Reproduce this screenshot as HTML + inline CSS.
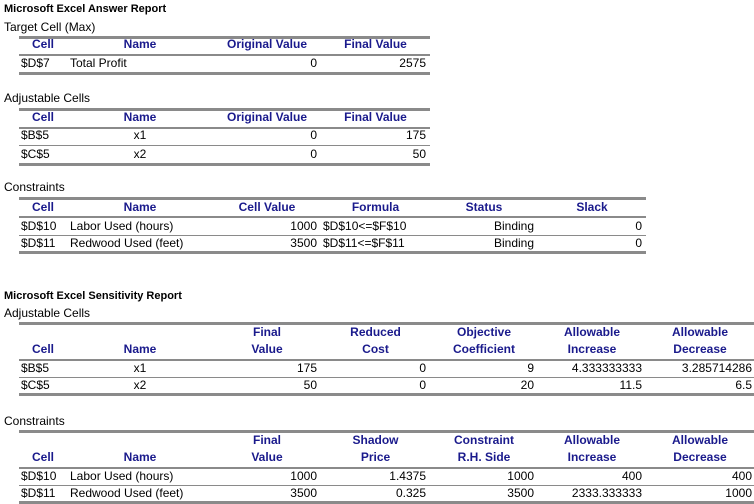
<!DOCTYPE html>
<html><head><meta charset="utf-8"><style>
body{margin:0;width:754px;height:504px;background:#fff;position:relative;overflow:hidden}
.t{position:absolute;font:12px/14px "Liberation Sans",sans-serif;white-space:nowrap;color:#000}
.b{font-weight:bold}
.h{color:#1a1a8c;font-weight:bold;text-align:center}
.r{text-align:right;padding-right:4px;box-sizing:border-box}
.c{text-align:center}
.L{position:absolute;background:#8a8a8a}
</style></head><body>
<div class="t b" style="left:4px;top:2px;font-size:11px">Microsoft Excel Answer Report</div>
<div class="t" style="left:4px;top:20px">Target Cell (Max)</div>
<div class="L" style="left:19px;top:36px;width:411px;height:3px"></div>
<div class="t h" style="left:19px;top:37px;width:48px">Cell</div>
<div class="t h" style="left:67px;top:37px;width:146px">Name</div>
<div class="t h" style="left:213px;top:37px;width:108px">Original Value</div>
<div class="t h" style="left:321px;top:37px;width:109px">Final Value</div>
<div class="L" style="left:19px;top:54px;width:411px;height:2px"></div>
<div class="t" style="left:21px;top:56px">$D$7</div>
<div class="t" style="left:70px;top:56px">Total Profit</div>
<div class="t r" style="left:213px;top:56px;width:108px">0</div>
<div class="t r" style="left:321px;top:56px;width:109px">2575</div>
<div class="L" style="left:19px;top:72px;width:411px;height:3px"></div>

<div class="t" style="left:4px;top:91px">Adjustable Cells</div>
<div class="L" style="left:19px;top:108px;width:411px;height:3px"></div>
<div class="t h" style="left:19px;top:110px;width:48px">Cell</div>
<div class="t h" style="left:67px;top:110px;width:146px">Name</div>
<div class="t h" style="left:213px;top:110px;width:108px">Original Value</div>
<div class="t h" style="left:321px;top:110px;width:109px">Final Value</div>
<div class="L" style="left:19px;top:127px;width:411px;height:2px"></div>
<div class="t" style="left:21px;top:128px">$B$5</div>
<div class="t c" style="left:67px;top:128px;width:146px">x1</div>
<div class="t r" style="left:213px;top:128px;width:108px">0</div>
<div class="t r" style="left:321px;top:128px;width:109px">175</div>
<div class="L" style="left:19px;top:145px;width:411px;height:1px"></div>
<div class="t" style="left:21px;top:147px">$C$5</div>
<div class="t c" style="left:67px;top:147px;width:146px">x2</div>
<div class="t r" style="left:213px;top:147px;width:108px">0</div>
<div class="t r" style="left:321px;top:147px;width:109px">50</div>
<div class="L" style="left:19px;top:163px;width:411px;height:3px"></div>

<div class="t" style="left:4px;top:180px">Constraints</div>
<div class="L" style="left:19px;top:197px;width:627px;height:3px"></div>
<div class="t h" style="left:19px;top:200px;width:48px">Cell</div>
<div class="t h" style="left:67px;top:200px;width:146px">Name</div>
<div class="t h" style="left:213px;top:200px;width:108px">Cell Value</div>
<div class="t h" style="left:321px;top:200px;width:109px">Formula</div>
<div class="t h" style="left:430px;top:200px;width:108px">Status</div>
<div class="t h" style="left:538px;top:200px;width:108px">Slack</div>
<div class="L" style="left:19px;top:216px;width:627px;height:2px"></div>
<div class="t" style="left:21px;top:219px">$D$10</div>
<div class="t" style="left:70px;top:219px">Labor Used (hours)</div>
<div class="t r" style="left:213px;top:219px;width:108px">1000</div>
<div class="t" style="left:323px;top:219px">$D$10&lt;=$F$10</div>
<div class="t r" style="left:430px;top:219px;width:108px">Binding</div>
<div class="t r" style="left:538px;top:219px;width:108px">0</div>
<div class="L" style="left:19px;top:235px;width:627px;height:1px"></div>
<div class="t" style="left:21px;top:236px">$D$11</div>
<div class="t" style="left:70px;top:236px">Redwood Used (feet)</div>
<div class="t r" style="left:213px;top:236px;width:108px">3500</div>
<div class="t" style="left:323px;top:236px">$D$11&lt;=$F$11</div>
<div class="t r" style="left:430px;top:236px;width:108px">Binding</div>
<div class="t r" style="left:538px;top:236px;width:108px">0</div>
<div class="L" style="left:19px;top:251px;width:627px;height:3px"></div>

<div class="t b" style="left:4px;top:289px;font-size:11px">Microsoft Excel Sensitivity Report</div>
<div class="t" style="left:4px;top:306px">Adjustable Cells</div>
<div class="L" style="left:19px;top:322px;width:735px;height:3px"></div>
<div class="t h" style="left:213px;top:325px;width:108px">Final</div>
<div class="t h" style="left:321px;top:325px;width:109px">Reduced</div>
<div class="t h" style="left:430px;top:325px;width:108px">Objective</div>
<div class="t h" style="left:538px;top:325px;width:108px">Allowable</div>
<div class="t h" style="left:646px;top:325px;width:108px">Allowable</div>
<div class="t h" style="left:19px;top:342px;width:48px">Cell</div>
<div class="t h" style="left:67px;top:342px;width:146px">Name</div>
<div class="t h" style="left:213px;top:342px;width:108px">Value</div>
<div class="t h" style="left:321px;top:342px;width:109px">Cost</div>
<div class="t h" style="left:430px;top:342px;width:108px">Coefficient</div>
<div class="t h" style="left:538px;top:342px;width:108px">Increase</div>
<div class="t h" style="left:646px;top:342px;width:108px">Decrease</div>
<div class="L" style="left:19px;top:359px;width:735px;height:2px"></div>
<div class="t" style="left:21px;top:361px">$B$5</div>
<div class="t c" style="left:67px;top:361px;width:146px">x1</div>
<div class="t r" style="left:213px;top:361px;width:108px">175</div>
<div class="t r" style="left:321px;top:361px;width:109px">0</div>
<div class="t r" style="left:430px;top:361px;width:108px">9</div>
<div class="t r" style="left:538px;top:361px;width:108px">4.333333333</div>
<div class="t r" style="left:646px;top:361px;width:108px;padding-right:2px">3.285714286</div>
<div class="L" style="left:19px;top:377px;width:735px;height:1px"></div>
<div class="t" style="left:21px;top:378px">$C$5</div>
<div class="t c" style="left:67px;top:378px;width:146px">x2</div>
<div class="t r" style="left:213px;top:378px;width:108px">50</div>
<div class="t r" style="left:321px;top:378px;width:109px">0</div>
<div class="t r" style="left:430px;top:378px;width:108px">20</div>
<div class="t r" style="left:538px;top:378px;width:108px">11.5</div>
<div class="t r" style="left:646px;top:378px;width:108px;padding-right:2px">6.5</div>
<div class="L" style="left:19px;top:393px;width:735px;height:3px"></div>

<div class="t" style="left:4px;top:414px">Constraints</div>
<div class="L" style="left:19px;top:430px;width:735px;height:3px"></div>
<div class="t h" style="left:213px;top:433px;width:108px">Final</div>
<div class="t h" style="left:321px;top:433px;width:109px">Shadow</div>
<div class="t h" style="left:430px;top:433px;width:108px">Constraint</div>
<div class="t h" style="left:538px;top:433px;width:108px">Allowable</div>
<div class="t h" style="left:646px;top:433px;width:108px">Allowable</div>
<div class="t h" style="left:19px;top:450px;width:48px">Cell</div>
<div class="t h" style="left:67px;top:450px;width:146px">Name</div>
<div class="t h" style="left:213px;top:450px;width:108px">Value</div>
<div class="t h" style="left:321px;top:450px;width:109px">Price</div>
<div class="t h" style="left:430px;top:450px;width:108px">R.H. Side</div>
<div class="t h" style="left:538px;top:450px;width:108px">Increase</div>
<div class="t h" style="left:646px;top:450px;width:108px">Decrease</div>
<div class="L" style="left:19px;top:467px;width:735px;height:2px"></div>
<div class="t" style="left:21px;top:469px">$D$10</div>
<div class="t" style="left:70px;top:469px">Labor Used (hours)</div>
<div class="t r" style="left:213px;top:469px;width:108px">1000</div>
<div class="t r" style="left:321px;top:469px;width:109px">1.4375</div>
<div class="t r" style="left:430px;top:469px;width:108px">1000</div>
<div class="t r" style="left:538px;top:469px;width:108px">400</div>
<div class="t r" style="left:646px;top:469px;width:108px;padding-right:2px">400</div>
<div class="L" style="left:19px;top:485px;width:735px;height:1px"></div>
<div class="t" style="left:21px;top:486px">$D$11</div>
<div class="t" style="left:70px;top:486px">Redwood Used (feet)</div>
<div class="t r" style="left:213px;top:486px;width:108px">3500</div>
<div class="t r" style="left:321px;top:486px;width:109px">0.325</div>
<div class="t r" style="left:430px;top:486px;width:108px">3500</div>
<div class="t r" style="left:538px;top:486px;width:108px">2333.333333</div>
<div class="t r" style="left:646px;top:486px;width:108px;padding-right:2px">1000</div>
<div class="L" style="left:19px;top:501px;width:735px;height:3px"></div>
</body></html>
